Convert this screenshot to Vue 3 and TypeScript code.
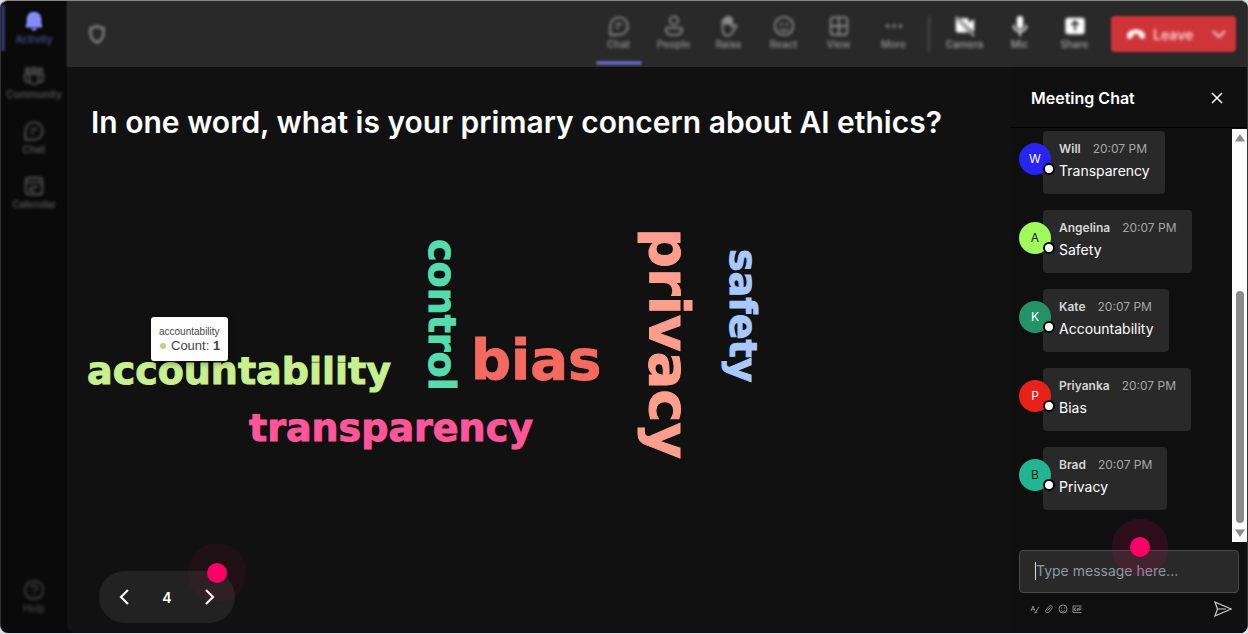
<script setup lang="ts">
interface Item { label: string; icon: string }
interface Message { name: string; text: string; color: string; dark: boolean }
interface Word { text: string; x: number; y: number; size: number; color: string; vertical: boolean }

const rail: Item[] = [
  { label: 'Activity', icon: 'bell' },
  { label: 'Community', icon: 'community' },
  { label: 'Chat', icon: 'chat' },
  { label: 'Calendar', icon: 'calendar' },
]
const tools: Item[] = [
  { label: 'Chat', icon: 'chat' },
  { label: 'People', icon: 'people' },
  { label: 'Raise', icon: 'hand' },
  { label: 'React', icon: 'smile' },
  { label: 'View', icon: 'grid' },
  { label: 'More', icon: 'more' },
]
const devices: Item[] = [
  { label: 'Camera', icon: 'camera' },
  { label: 'Mic', icon: 'mic' },
  { label: 'Share', icon: 'share' },
]
const messages: Message[] = [
  { name: 'Will', text: 'Transparency', color: '#2824f2', dark: false },
  { name: 'Angelina', text: 'Safety', color: '#a0fa5c', dark: true },
  { name: 'Kate', text: 'Accountability', color: '#249468', dark: false },
  { name: 'Priyanka', text: 'Bias', color: '#ea2118', dark: false },
  { name: 'Brad', text: 'Privacy', color: '#22b592', dark: true },
]
const words: Word[] = [
  { text: 'accountability', x: 20, y: 240, size: 38, color: '#c8f08f', vertical: false },
  { text: 'transparency', x: 182, y: 297, size: 38, color: '#ff5599', vertical: false },
  { text: 'bias', x: 404, y: 235, size: 56, color: '#f46a60', vertical: false },
  { text: 'control', x: 362, y: 95, size: 38, color: '#55dcae', vertical: true },
  { text: 'privacy', x: 583, y: 84, size: 56, color: '#ff9e8c', vertical: true },
  { text: 'safety', x: 663, y: 105, size: 38, color: '#a8c8ff', vertical: true },
]
const place = (w: Word) => `translate(${w.x} ${w.y})` + (w.vertical ? ' rotate(90)' : '')
</script>

<template>
  <svg class="defs" aria-hidden="true">
    <symbol id="bell" viewBox="0 0 24 24"><path d="M12 2c-4.600 0-8 3.400-8 8v4l-1 3.500c-.2.800.2 1.500 1 1.500h16c.8 0 1.200-.7 1-1.500L20 14v-4c0-4.600-3.400-8-8-8zM8.500 20c.5 1.600 1.900 2.500 3.500 2.500s3-.9 3.500-2.500z" fill="currentColor" /></symbol>
    <symbol id="community" viewBox="0 0 24 24"><g fill="none" stroke="currentColor" stroke-width="2"><circle cx="5" cy="5.500" r="2" /><circle cx="12" cy="5.500" r="2.500" /><circle cx="19" cy="5.500" r="2" /><path d="M7 10h10v6a5 5 0 0 1-10 0zM7 10H2v5c0 3 2 4 5 4M17 10h5v5c0 3-2 4-5 4" /></g></symbol>
    <symbol id="chat" viewBox="0 0 24 24"><path d="M2.500 21.500V12A9.500 9.500 0 1 1 12 21.500zM8.500 10h7M8.500 14h3.500" fill="none" stroke="currentColor" stroke-width="2" stroke-linejoin="round" /></symbol>
    <symbol id="calendar" viewBox="0 0 24 24"><rect x="3" y="3" width="18" height="18" rx="3" fill="none" stroke="currentColor" stroke-width="2" /><path d="M3 8h18M7 16l3-3h7M7 17h6" fill="none" stroke="currentColor" stroke-width="2" /></symbol>
    <symbol id="help" viewBox="0 0 24 24"><circle cx="12" cy="12" r="10" fill="none" stroke="currentColor" stroke-width="2" /><path d="M8.800 9.500a3.200 3.200 0 1 1 4.700 2.800c-1 .6-1.500 1-1.500 2.200M12 16.500v2" fill="none" stroke="currentColor" stroke-width="2" /></symbol>
    <symbol id="people" viewBox="0 0 24 24"><circle cx="12" cy="6" r="4.500" fill="none" stroke="currentColor" stroke-width="2" /><path d="M4 14h16c1 0 1 1.500 1 2-.5 4-4.500 6-9 6s-8.500-2-9-6c0-.5 0-2 1-2z" fill="none" stroke="currentColor" stroke-width="2" /></symbol>
    <symbol id="hand" viewBox="0 0 24 24"><path d="M5 14V6.500a1.300 1.300 0 0 1 2.600 0V4a1.300 1.300 0 0 1 2.600 0V2.800a1.300 1.300 0 0 1 2.600 0V4.500a1.300 1.300 0 0 1 2.600 0V13l2.600-2c1.300-.8 2.600.4 2 1.600L15 20c-1.300 2-3 2.800-5 2.800-3.500 0-5-3-5-8.800z" fill="none" stroke="currentColor" stroke-width="2" /><path d="M6 4l5-2 4 3v7l-5-2-4 1z" fill="currentColor" /></symbol>
    <symbol id="smile" viewBox="0 0 24 24"><circle cx="12" cy="12" r="10" fill="none" stroke="currentColor" stroke-width="2" /><circle cx="9" cy="10" r="1.500" fill="currentColor" /><circle cx="15" cy="10" r="1.500" fill="currentColor" /><path d="M7.500 15c2 3 7 3 9 0" fill="none" stroke="currentColor" stroke-width="2" /></symbol>
    <symbol id="grid" viewBox="0 0 24 24"><rect x="3" y="2.500" width="18" height="19" rx="3" fill="none" stroke="currentColor" stroke-width="2" /><path d="M12 3v18M3 12h18" stroke="currentColor" stroke-width="2" /></symbol>
    <symbol id="more" viewBox="0 0 24 24"><g fill="currentColor"><circle cx="5" cy="12" r="2" /><circle cx="12" cy="12" r="2" /><circle cx="19" cy="12" r="2" /></g></symbol>
    <symbol id="camera" viewBox="0 0 24 24"><path d="M6 3.500h8c1.500 0 2 1 2 2v3l6-4v14l-6-5zM2 4l14 15H4c-1.500 0-2-1-2-2z" fill="currentColor" /><path d="M2 2l20 21" stroke="currentColor" stroke-width="1.500" /></symbol>
    <symbol id="mic" viewBox="0 0 24 24"><rect x="8.500" y="1" width="7" height="14" rx="3.500" fill="currentColor" /><path d="M5 11c0 9 14 9 14 0M12 18v5" fill="none" stroke="currentColor" stroke-width="2" /></symbol>
    <symbol id="share" viewBox="0 0 24 24"><rect x="1.500" y="3" width="21" height="18" rx="3" fill="currentColor" /><path d="M12 17V7M8 11l4-4 4 4" fill="none" stroke="#292929" stroke-width="2" /></symbol>
  </svg>

  <div class="window">
    <nav class="rail" aria-label="Apps">
      <button v-for="(item, i) in rail" :key="item.label" type="button" class="tile" :class="{ current: i === 0 }">
        <svg class="icon"><use :href="'#' + item.icon" /></svg>
        <span>{{ item.label }}</span>
      </button>
      <button type="button" class="tile help">
        <svg class="icon"><use href="#help" /></svg>
        <span>Help</span>
      </button>
    </nav>

    <div class="content">
      <header class="toolbar">
        <svg class="shield" viewBox="0 0 20 20"><path d="M10 2c2 1.500 4 2 6.500 2v5c0 5-2 7.500-6.500 9.500C5.500 16.500 3.500 14 3.500 9V4C6 4 8 3.500 10 2z" /></svg>
        <div class="tools">
          <button v-for="(item, i) in tools" :key="item.label" type="button" class="tile" :class="{ selected: i === 0 }">
            <svg class="icon"><use :href="'#' + item.icon" /></svg>
            <span>{{ item.label }}</span>
          </button>
          <i class="divider"></i>
          <button v-for="item in devices" :key="item.label" type="button" class="tile device">
            <svg class="icon"><use :href="'#' + item.icon" /></svg>
            <span>{{ item.label }}</span>
          </button>
          <button type="button" class="leave">
            <svg width="20" height="12" viewBox="0 0 20 12"><path d="M1 8c0-4 4-6.500 9-6.500S19 4 19 8c0 2-1 3-2.500 2.700l-2-.5c-1-.2-1.500-1-1.500-2V6.500c-2-.6-4-.6-6 0v1.700c0 1-.5 1.800-1.500 2l-2 .5C2 11 1 10 1 8z" fill="currentColor" /></svg>
            <span>Leave</span>
            <svg width="14" height="10" viewBox="0 0 14 10"><path d="M1 2l6 6 6-6" fill="none" stroke="currentColor" stroke-width="2" /></svg>
          </button>
        </div>
      </header>

      <div class="body">
        <main class="stage">
          <h1>In one word, what is your primary concern about AI ethics?</h1>
          <div class="cloud">
            <svg class="words" role="img" aria-label="Word cloud">
              <text v-for="w in words" :key="w.text" :transform="place(w)" :font-size="w.size" :fill="w.color" :stroke="w.color">{{ w.text }}</text>
            </svg>
            <div class="tooltip" role="tooltip">
              <div class="tip-title">accountability</div>
              <div class="tip-row"><i></i><span>Count: <b>1</b></span></div>
            </div>
          </div>
          <div class="pager">
            <button type="button" aria-label="Previous"><svg width="12" height="18" viewBox="0 0 12 18"><path d="M10 2L3 9l7 7" /></svg></button>
            <span>4</span>
            <button type="button" aria-label="Next"><svg width="12" height="18" viewBox="0 0 12 18"><path d="M2 2l7 7-7 7" /></svg></button>
            <i class="pulse"></i>
          </div>
        </main>

        <aside class="chat">
          <div class="chat-head">
            <h2>Meeting Chat</h2>
            <button type="button" aria-label="Close"><svg width="12" height="12" viewBox="0 0 12 12"><path d="M1 1l10 10M11 1L1 11" /></svg></button>
          </div>
          <div class="feed">
            <ul>
              <li v-for="m in messages" :key="m.name">
                <div class="avatar" :class="{ dark: m.dark }" :style="{ background: m.color }">{{ m.name[0] }}<i></i></div>
                <div class="bubble">
                  <div class="meta"><b>{{ m.name }}</b><time>20:07 PM</time></div>
                  <p>{{ m.text }}</p>
                </div>
              </li>
            </ul>
            <div class="scrollbar">
              <svg width="10" height="8" viewBox="0 0 10 8"><path d="M5 0l5 7.500H0z" /></svg>
              <div class="track"><div class="thumb"></div></div>
              <svg width="10" height="8" viewBox="0 0 10 8"><path d="M5 8L0 .5h10z" /></svg>
            </div>
          </div>
          <div class="compose">
            <input type="text" placeholder="Type message here..." aria-label="Message" />
            <i class="caret"></i>
            <i class="pulse"></i>
          </div>
          <div class="actions">
            <button type="button" aria-label="Format"><svg viewBox="0 0 10 10"><path d="M1 7l2-5 1.500 4M2 5l3 1M5 9l4-6M4.500 9l3-1" /></svg></button>
            <button type="button" aria-label="Attach"><svg viewBox="0 0 10 10"><path d="M3.500 6.500l3-3M2 6l3-3.500c2-2 4.500 0 2.500 2.500L5 8C3 9.500 .5 8 2 6z" /></svg></button>
            <button type="button" aria-label="Emoji"><svg viewBox="0 0 10 10"><circle cx="5" cy="5" r="4" /><path d="M3 6c1 2 3 2 4 0M3.500 3.500v1M6.500 3.500v1" /></svg></button>
            <button type="button" aria-label="GIF"><svg viewBox="0 0 10 10"><path d="M9.500 2H1v6.500h8.500M4 4H2.500v2.500H4V5.500M5.500 4v3M7 7V4h2.500M7 5.500h2" /></svg></button>
            <button type="button" class="send" aria-label="Send"><svg width="18" height="18" viewBox="0 0 18 18"><path d="M1 2l16 7L1 16l2.500-7zM3.500 9H12" /></svg></button>
          </div>
        </aside>
      </div>
    </div>
  </div>
</template>

<style>
body { background: #dedee2; }
</style>

<style scoped>
* { box-sizing: border-box; }
.defs { position: absolute; width: 0; height: 0; }
.window {
  display: flex;
  min-height: calc(100vh - 1px);
  border: 1px solid #333;
  border-top-color: #858585;
  border-bottom: 0;
  border-radius: 8px;
  overflow: hidden;
  background: #0a0a0a;
  color: #fff;
  font-family: Inter, "Liberation Sans", sans-serif;
}
button { border: 0; padding: 0; background: none; color: inherit; font: inherit; }
h1, h2, p, ul { margin: 0; padding: 0; }
.rail { width: 66px; flex: none; display: flex; flex-direction: column; padding-bottom: 8px; color: #555; }
.tile {
  display: flex; flex-direction: column; align-items: center;
  height: 55px; padding-top: 8px; font-size: 10px; line-height: 13px; font-weight: 600;
}
.tile .icon { width: 24px; height: 24px; padding: 1px; }
.tile > *, .shield, .divider { filter: blur(1px) blur(1px); }
.rail .current { color: #4a4a90; }
.rail .current::before { content: ""; position: absolute; left: 1px; width: 4px; height: 46px; background: #34346e; margin-top: -4px; filter: blur(1px); }
.rail .current .icon { color: #868bf8; filter: blur(1px); }
.help { margin-top: auto; color: #404040; }
.content { flex: 1; min-width: 0; display: flex; flex-direction: column; }
.toolbar {
  display: flex; align-items: center; justify-content: space-between;
  height: 66px; padding: 0 11px 0 20px; background: #292929; color: #8c8c8c;
  box-shadow: 0 0 3px #292929;
}
.shield { width: 20px; height: 20px; fill: none; stroke: #999; stroke-width: 2; }
.tools { display: flex; align-items: center; height: 100%; }
.tools .tile { width: 55px; height: 66px; padding-top: 13px; }
.tools .tile.selected::after { content: ""; width: 46px; height: 4px; margin-top: 10px; background: #6264b8; border-radius: 2px; filter: blur(1px); }
.tools .device { color: #999; }
.device .icon { color: #fff; }
.divider { width: 2px; height: 36px; margin: 0 7px; background: #4a4a4a; }
.leave {
  display: flex; align-items: center; width: 125px; height: 36px; margin-left: 9px; padding: 0 10px 0 15px;
  background: #cf3439; border-radius: 4px; color: #fcd0d0; font-size: 14px; font-weight: 600; filter: blur(1px);
}
.leave > * { filter: blur(1px); }
.leave span { flex: 1; text-align: left; margin-left: 7px; }
.leave svg:first-child { color: #fff; }
.body { flex: 1; display: flex; background: #111; border-bottom-left-radius: 8px; }
.stage { flex: 1; min-width: 0; display: flex; flex-direction: column; padding: 33px 0 10px; }
h1 { padding-left: 24px; font-size: 30px; line-height: 44px; font-weight: 600; }
.cloud { position: relative; flex: 1; min-height: 340px; }
.words { display: block; width: 100%; height: 100%; font-family: "DejaVu Sans", sans-serif; font-weight: 700; stroke-width: 1; }
.tooltip {
  position: absolute; left: 84px; top: 173px; padding: 8px; background: #fff; color: #464646;
  border-radius: 3px; box-shadow: 1px 2px 6px rgba(0, 0, 0, .4); font-family: "Liberation Sans", Arial, sans-serif;
}
.tip-title { font-size: 10px; line-height: 13px; }
.tip-row { display: flex; align-items: center; gap: 5px; font-size: 13px; line-height: 15px; }
.tip-row i { width: 6px; height: 6px; margin-left: 1px; border-radius: 50%; background: #b0d978; }
.pager {
  position: relative; align-self: flex-start; display: flex; align-items: center; justify-content: space-between;
  width: 136px; height: 52px; margin-left: 32px; padding: 0 19px; background: #222; border-radius: 26px;
  font-size: 14px; font-weight: 600;
}
.pager button { display: flex; }
.pager svg { fill: none; stroke: #f4f4f4; stroke-width: 2.200; }
.pulse { position: absolute; width: 20px; height: 20px; border-radius: 50%; background: #ff0066; pointer-events: none; }
.pager .pulse { right: 8px; top: -8px; box-shadow: 0 0 0 19px rgba(255, 0, 102, .06); }
.compose .pulse { left: 111px; top: -13px; box-shadow: 0 0 0 18px rgba(255, 0, 102, .13); }
.chat { width: 236px; flex: none; display: flex; flex-direction: column; background: #0f0f0f; }
.chat-head { display: flex; align-items: center; justify-content: space-between; height: 61px; padding: 2px 24px 0 20px; border-bottom: 1px solid #000; }
h2 { font-size: 16px; line-height: 24px; font-weight: 600; }
.chat-head button { display: flex; }
.chat-head svg { fill: none; stroke: #fff; stroke-width: 1.500; }
.feed { flex: 1; display: flex; justify-content: space-between; margin-top: 1px; }
ul { list-style: none; display: flex; flex-direction: column; gap: 16px; padding: 2px 0 0 8px; }
li { display: flex; align-items: flex-start; }
.avatar {
  position: relative; z-index: 1; width: 32px; height: 32px; margin: 12px -8px 0 0; border-radius: 50%;
  font-size: 12px; line-height: 31px; text-align: center;
}
.avatar.dark { color: #10231b; }
.avatar i { position: absolute; right: -4px; bottom: 0; width: 12px; height: 12px; border: 2px solid #000; border-radius: 50%; background: #fff; }
.bubble { padding: 8px 15px 11px 16px; background: #292929; border-radius: 4px; }
.meta { display: flex; gap: 12px; font-size: 12px; line-height: 20px; }
.meta b { font-weight: 600; color: #d6d6d6; }
.meta time { color: #a6a6a6; }
.bubble p { font-size: 14px; line-height: 24px; }
.scrollbar { display: flex; flex-direction: column; align-items: center; width: 15px; padding: 5px 0; background: #fcfcfc; }
.scrollbar svg { fill: #8b8b8b; flex: none; }
.track { flex: 1; width: 8px; display: flex; flex-direction: column; justify-content: flex-end; padding-bottom: 6px; }
.thumb { height: 61%; border-radius: 4px; background: #8b8b8b; }
.compose { position: relative; margin: 8px 8px 0; }
.compose input {
  display: block; width: 100%; height: 43px; padding: 0 16px 3px; border: 1px solid #484848; border-radius: 4px;
  background: #292929; color: #fff; font: 14px/20px Inter, "Liberation Sans", sans-serif; outline: 0;
}
.compose input::placeholder { color: #8e98a3; opacity: 1; }
.caret { position: absolute; left: 16px; top: 12px; width: 1px; height: 18px; background: #ddd; }
.actions { display: flex; align-items: center; gap: 4px; height: 40px; padding: 0 15px 8px 19px; }
.actions button { display: flex; }
.actions svg { width: 10px; height: 10px; fill: none; stroke: #888; stroke-width: 1; }
.actions .send { margin-left: auto; }
.actions .send svg { width: 18px; height: 18px; stroke: #ccc; stroke-width: 1.200; }
</style>
